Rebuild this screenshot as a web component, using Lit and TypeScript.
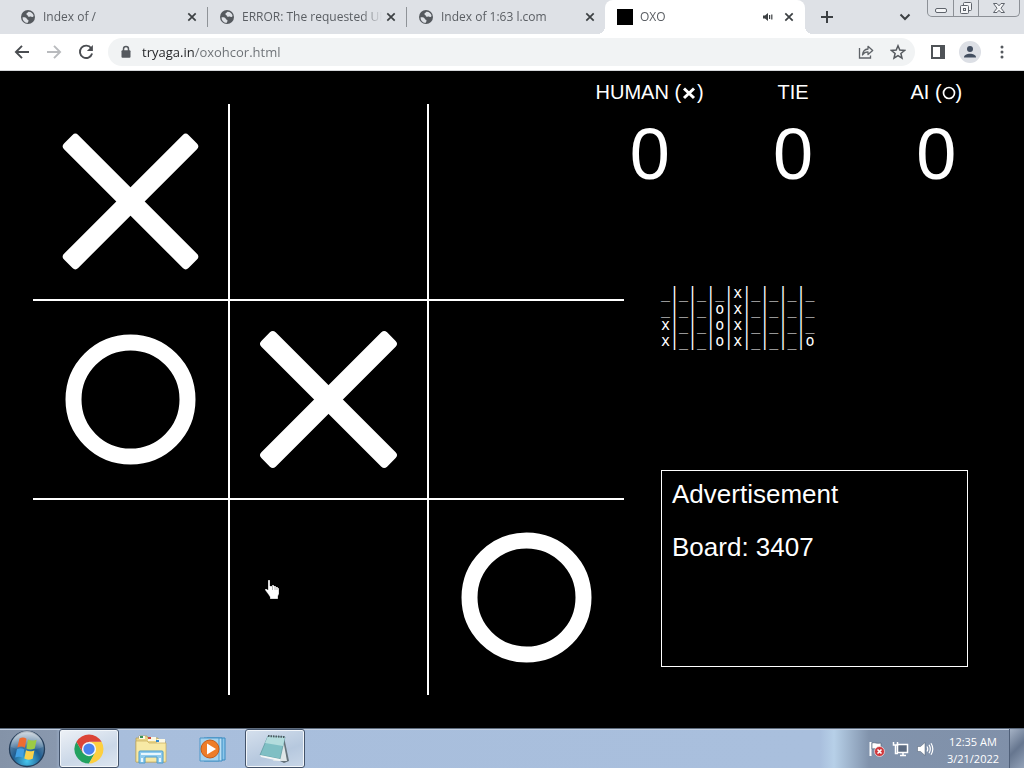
import { LitElement, html, svg, css, nothing } from "lit";
import { customElement, property } from "lit/decorators.js";
import { classMap } from "lit/directives/class-map.js";

const globe = html`<svg class="fav" viewBox="0 0 16 16" width="16" height="16" aria-hidden="true">
  <circle cx="8" cy="8" r="7" fill="#55595e" />
  <path d="M2.6 8.3c1.8-.2 3.600.2 4.200 1.500.5 1.200 1.800.7 1.700 2.100-.1 1-.9 1.200-.9 2.200C4.500 13.800 2.400 11.300 2.600 8.300z" fill="#dee1e6" />
  <path d="M8.400 2.800c-.4 1.200-1.900.9-2 2.100-.1 1 1.300.9 1.400 1.900.1.900 1.300 1.300 2.200.8 1-.6 1.500.6 2.600.4.5-.1.800-.5 1-.9-.4-2.600-2.600-4.400-5.200-4.300z" fill="#dee1e6" />
</svg>`;

const closeIcon = html`<svg viewBox="0 0 10 10" width="10" height="10" aria-hidden="true">
  <path d="M1.300 1.300 8.700 8.700M8.700 1.300 1.300 8.700" stroke="#3c4043" stroke-width="1.700" />
</svg>`;

@customElement("browser-tab")
class BrowserTab extends LitElement {
  @property() label = "";
  @property({ type: Boolean }) active = false;
  @property({ type: Boolean }) divided = false;

  static styles = css`
    :host { display: block; flex: 0 1 199px; min-width: 0; }
    .tab {
      position: relative; box-sizing: border-box; height: 34px; display: flex;
      align-items: center; padding: 0 11px; font: 12px/16px "Open Sans", sans-serif; color: #5a5e63;
    }
    .active { background: #fff; border-radius: 8px 8px 0 0; margin-left: -1px; padding-left: 12px; }
    .active::before, .active::after {
      content: ""; position: absolute; bottom: 0; width: 8px; height: 8px;
    }
    .active::before { left: -8px; background: radial-gradient(circle at 0 0, transparent 8px, #fff 8px); }
    .active::after { right: -8px; background: radial-gradient(circle at 100% 0, transparent 8px, #fff 8px); }
    .divided { border-right: 1px solid #8f9398; border-image: linear-gradient(transparent 8px, #8f9398 8px 26px, transparent 26px) 1; padding-right: 10px; }
    .fav { flex: none; }
    .black { width: 16px; height: 16px; background: #000; }
    .label {
      flex: 1; min-width: 0; margin: 0 4px 0 7px; overflow: hidden; white-space: nowrap;
      mask-image: linear-gradient(to right, #000 calc(100% - 20px), transparent);
    }
    button { border: 0; background: none; padding: 0; display: flex; }
    .audio { margin-right: 10px; }
  `;

  render() {
    return html`<div class=${classMap({ tab: true, active: this.active, divided: this.divided })}>
      ${this.active ? html`<span class="fav black"></span>` : globe}
      <span class="label">${this.label}</span>
      ${this.active
        ? html`<button class="audio" aria-label="Mute tab">
            <svg viewBox="0 0 12 10" width="12" height="10" aria-hidden="true">
              <path d="M1 3.500h2L6 1v8L3 6.500H1z" fill="#3c4043" />
              <path d="M7.600 3v4M9.800 2.500v5" stroke="#3c4043" stroke-width="1.200" />
            </svg></button>`
        : nothing}
      <button aria-label="Close tab">${closeIcon}</button>
    </div>`;
  }
}

@customElement("browser-chrome")
class BrowserChrome extends LitElement {
  static styles = css`
    :host { display: block; }
    button { border: 0; background: none; padding: 0; display: flex; align-items: center; justify-content: center; }
    .strip { display: flex; background: #dee1e6; height: 34px; padding-left: 9px; }
    .tabs { display: flex; flex: 0 1 796px; min-width: 0; }
    .new { width: 28px; margin-left: 8px; flex: none; }
    .spacer { flex: 1; }
    .search { width: 28px; margin-right: 8px; flex: none; }
    .window {
      display: flex; flex: none; height: 16px; margin-right: 4px; border: 1px solid #8c9096; border-top: 0;
      border-radius: 0 0 5px 5px;
    }
    .window button { width: 25px; }
    .window button + button { border-left: 1px solid #8c9096; }
    .window .shut { width: 41px; }
    .bar { display: flex; align-items: center; height: 36px; padding: 0 6px; background: #fff; border-bottom: 1px solid #d5d7da; }
    .nav { width: 32px; height: 28px; flex: none; }
    .field {
      flex: 1; min-width: 0; display: flex; align-items: center; height: 28px; border-radius: 14px;
      background: #f1f3f4; margin: 0 7px 0 6px; padding: 0 7px 0 12px;
    }
    .url {
      flex: 1; min-width: 0; border: 0; outline: 0; padding: 0; margin-left: 10px; height: 20px;
      font: 13px/20px "Open Sans", sans-serif; color: transparent;
      background: linear-gradient(to right, #202124 53px, #6b6f74 53px);
      -webkit-background-clip: text; background-clip: text;
    }
    .act { width: 20px; flex: none; margin-left: 12px; }
    .side { width: 32px; height: 28px; flex: none; }
  `;

  render() {
    return html`
      <div class="strip">
        <div class="tabs">
          <browser-tab label="Index of /" divided></browser-tab>
          <browser-tab label="ERROR: The requested UR" divided></browser-tab>
          <browser-tab label="Index of 1:63 l.com"></browser-tab>
          <browser-tab label="OXO" active></browser-tab>
        </div>
        <button class="new" aria-label="New tab">
          <svg viewBox="0 0 12 12" width="12" height="12"><path d="M6 0v12M0 6h12" stroke="#3c4043" stroke-width="2" /></svg>
        </button>
        <span class="spacer"></span>
        <button class="search" aria-label="Search tabs">
          <svg viewBox="0 0 12 8" width="12" height="8"><path d="M1.500 1.500 6 6l4.500-4.500" fill="none" stroke="#3c4043" stroke-width="2" /></svg>
        </button>
        <div class="window">
          <button aria-label="Minimize"><svg viewBox="0 0 14 14" width="14" height="14"><rect x="1.500" y="7.500" width="11" height="4" rx="1.500" fill="#f4f5f7" stroke="#5f646c" /></svg></button>
          <button aria-label="Restore"><svg viewBox="0 0 14 14" width="14" height="14"><g fill="#f4f5f7" stroke="#5f646c"><rect x="4.500" y="1.500" width="8" height="8" rx="1" /><rect x="1.500" y="4.500" width="8" height="8" rx="1" /><rect x="4.500" y="7.500" width="2" height="2" /></g></svg></button>
          <button class="shut" aria-label="Close"><svg viewBox="0 0 14 14" width="14" height="14"><path d="M1.500 2.500h3.500l2 2.300 2-2.300h3.500L9 7.200l3.500 4.300H9L7 9.300 5 11.500H1.500L5 7.200z" fill="#f4f5f7" stroke="#5f646c" /></svg></button>
        </div>
      </div>
      <div class="bar">
        <button class="nav" aria-label="Back">
          <svg viewBox="0 0 16 16" width="16" height="16"><path d="M15 8H2M8 1.800 1.900 8 8 14.200" fill="none" stroke="#4a4d51" stroke-width="1.900" /></svg>
        </button>
        <button class="nav" aria-label="Forward">
          <svg viewBox="0 0 16 16" width="16" height="16"><path d="M1 8h13M8 1.800 14.100 8 8 14.200" fill="none" stroke="#b9bbbe" stroke-width="1.900" /></svg>
        </button>
        <button class="nav" aria-label="Reload">
          <svg viewBox="0 0 16 16" width="16" height="16"><path d="M13.200 4.200A6.200 6.200 0 1 0 14.100 9.500" fill="none" stroke="#4a4d51" stroke-width="1.900" /><path d="M14.900 1v6H8.900z" fill="#4a4d51" /></svg>
        </button>
        <div class="field">
          <svg viewBox="0 0 12 14" width="12" height="14"><path d="M3.500 6V4a2.500 2.500 0 0 1 5 0v2" fill="none" stroke="#55595e" stroke-width="1.500" /><rect x="1.500" y="5.300" width="9" height="7.500" rx="1" fill="#55595e" /></svg>
          <input class="url" aria-label="Address" value="tryaga.in/oxohcor.html" />
          <button class="act" aria-label="Share">
            <svg viewBox="0 0 16 16" width="16" height="16"><path d="M1.500 4v10h11v-2.500" fill="none" stroke="#5f6368" stroke-width="1.300" /><path d="M4.500 11c.3-4 2.300-5.700 5.500-6V2.300L14.700 6.500 10 10.500V7.900C7.500 7.900 5.800 8.800 4.500 11z" fill="none" stroke="#5f6368" stroke-width="1.300" stroke-linejoin="round" /></svg>
          </button>
          <button class="act" aria-label="Bookmark">
            <svg viewBox="0 0 16 16" width="16" height="16"><path d="M8 1.800l1.800 4.300 4.700.4-3.600 3 1.100 4.600L8 11.600l-4 2.500 1.100-4.600-3.600-3 4.700-.4z" fill="none" stroke="#55595e" stroke-width="1.500" /></svg>
          </button>
        </div>
        <button class="side" aria-label="Side panel">
          <svg viewBox="0 0 14 14" width="14" height="14"><rect x="1" y="1" width="12" height="12" fill="none" stroke="#4f5357" stroke-width="2" /><path d="M9 1h4v12H9z" fill="#4f5357" /></svg>
        </button>
        <button class="side" aria-label="Profile">
          <svg viewBox="0 0 22 22" width="22" height="22"><circle cx="11" cy="11" r="11" fill="#dcdfe5" /><circle cx="11" cy="8" r="3" fill="#424e60" /><path d="M5 16.500c0-5 12-5 12 0z" fill="#424e60" /></svg>
        </button>
        <button class="side" aria-label="Menu">
          <svg viewBox="0 0 4 14" width="4" height="14"><g fill="#55595e"><circle cx="2" cy="2" r="1.500" /><circle cx="2" cy="7" r="1.500" /><circle cx="2" cy="12" r="1.500" /></g></svg>
        </button>
      </div>
    `;
  }
}

const crossShape = svg`<g fill="#fff">
  <rect x="-88" y="-10" width="176" height="20" rx="4" transform="rotate(45)" />
  <rect x="-88" y="-10" width="176" height="20" rx="4" transform="rotate(-45)" />
</g>`;
const ringShape = svg`<circle r="57" fill="none" stroke="#fff" stroke-width="16" />`;

@customElement("oxo-game")
class OxoGame extends LitElement {
  @property({ attribute: false }) cells = ["x", "", "", "o", "x", "", "", "", "o"];

  static styles = css`
    :host { display: flex; flex: 1; min-height: 0; background: #000; color: #fff; font-family: "Liberation Sans", Arial, sans-serif; }
    .board {
      flex: none; height: calc(100% - 66px); aspect-ratio: 1; margin: 33px 0 33px 33px;
      display: grid; grid-template: repeat(3, 1fr) / repeat(3, 1fr);
    }
    .cell { position: relative; border: 0 solid #fff; background: none; padding: 0; min-width: 0; min-height: 0; display: flex; }
    .c0 { border-right-width: 2px; }
    .c2 { border-left-width: 2px; }
    .r0 { border-bottom-width: 2px; }
    .r2 { border-top-width: 2px; }
    .mark { width: 100%; height: 100%; }
    .pointer { position: absolute; left: 34px; top: 79px; }
    .panel { flex: 1; min-width: 0; display: flex; flex-direction: column; }
    .scores { display: flex; margin: 8px 16px 0 -46px; }
    .score { flex: 1; display: flex; flex-direction: column; align-items: center; }
    .who { font-size: 20px; line-height: 26px; display: flex; align-items: center; }
    .sym { margin-top: 2px; }
    .points { font-size: 72px; line-height: 84px; margin-top: 7px; }
    .history { margin: 89px 0 0 37px; font: 15px/16px "DejaVu Sans Mono", monospace; }
    .ad {
      box-sizing: border-box; height: 197px; margin: auto 56px 61px 37px; border: 1px solid #fff;
      padding: 8px 10px; font-size: 26px; line-height: 30px;
    }
    .ad p { margin: 0 0 23px; }
  `;

  private score(name: string, symbol: unknown, points: number) {
    return html`<div class="score">
      <div class="who">${name}${symbol ? html`&nbsp;(${symbol})` : nothing}</div>
      <div class="points">${points}</div>
    </div>`;
  }

  render() {
    return html`
      <div class="board">
        ${this.cells.map(
          (c, i) => html`<button class="cell c${i % 3} r${Math.floor(i / 3)}" aria-label="Square ${i + 1}">
            ${c
              ? html`<svg class="mark" viewBox="-97.5 -97.5 195 195">${c === "x" ? crossShape : ringShape}</svg>`
              : nothing}
            ${i === 7
              ? html`<svg class="pointer" viewBox="0 0 16 21" width="16" height="21" aria-hidden="true">
                  <path d="M4 1h2v6h2V6h2v1h2v1h2v1h1v6l-1 2v3H6v-2l-2-3-3-4v-1h2l1 1z" fill="#fff" stroke="#000" stroke-width=".3" />
                  <path d="M8.500 7v4M11 8v3M13 9v2" stroke="#888" stroke-width=".6" />
                </svg>`
              : nothing}
          </button>`
        )}
      </div>
      <div class="panel">
        <div class="scores">
          ${this.score(
            "HUMAN",
            html`<svg class="sym" viewBox="0 0 16 14" width="16" height="14"><path d="M3 2.500l10 9.500M13 2.500L3 12" stroke="#fff" stroke-width="3" /></svg>`,
            0
          )}
          ${this.score("TIE", null, 0)}
          ${this.score(
            "AI",
            html`<svg class="sym" viewBox="0 0 14 14" width="14" height="14"><circle cx="7" cy="7" r="5.500" fill="none" stroke="#fff" stroke-width="1.700" /></svg>`,
            0
          )}
        </div>
        <div class="history">
          <div>_|_|_|_|x|_|_|_|_</div>
          <div>_|_|_|o|x|_|_|_|_</div>
          <div>x|_|_|o|x|_|_|_|_</div>
          <div>x|_|_|o|x|_|_|_|o</div>
        </div>
        <div class="ad">
          <p>Advertisement</p>
          <p>Board: 3407</p>
        </div>
      </div>
    `;
  }
}

const startOrb = svg`
  <defs>
    <radialGradient id="orb" cx=".5" cy=".85" r=".8"><stop offset="0" stop-color="#45c6ee" /><stop offset=".5" stop-color="#225f92" /><stop offset="1" stop-color="#7d96ad" /></radialGradient>
    <linearGradient id="gloss" x2="0" y2="1"><stop offset="0" stop-color="#fff" stop-opacity=".65" /><stop offset="1" stop-color="#fff" stop-opacity=".05" /></linearGradient>
  </defs>
  <circle cx="19" cy="19" r="17.500" fill="url(#orb)" stroke="#243d59" stroke-width="1.300" />
  <path d="M3 17a16 16 0 0 1 32 0c-8 4-24 4-32 0z" fill="url(#gloss)" />
  <path d="M11.500 8.500c2.500-1.500 4.800-1.200 7 .2l-1.700 9c-2.200-1.300-4.500-1.500-7.500-.2z" fill="#ee6c31" />
  <path d="M20 9.500c2.300 1.300 4.800 1.400 8.600.2l-1.800 8.900c-3.600 1.200-6 1.100-8.400-.2z" fill="#9ccb45" />
  <path d="M8.900 19.200c3-1.300 5.300-1.100 7.500.2l-1.700 8.400c-2.200-1.300-4.500-1.500-7.500-.2z" fill="#42a0e4" />
  <path d="M18 20.200c2.300 1.300 4.800 1.400 8.400.2l-1.700 8.400c-3.600 1.200-6 1.100-8.400-.2z" fill="#fbd24b" />`;

const chromeLogo = svg`
  <path d="M2.600 8.200 9.300 19.800 16 23.500l6.600-3.600L16 31.500A15.500 15.500 0 0 1 2.600 8.200z" fill="#22a160" />
  <path d="M29.400 8.300A15.500 15.500 0 0 1 16 31.500l6.500-11.800L16 8.300z" fill="#fdcf3f" />
  <path d="M2.600 8.200 9.400 20l6.600-4V8.300h13.400A15.500 15.500 0 0 0 2.600 8.200z" fill="#db4437" />
  <circle cx="16" cy="16" r="7.600" fill="#f3f6fa" /><circle cx="16" cy="16" r="6" fill="#4a82ee" />`;

const folderIcon = svg`
  <path d="M1 5h3V3h8l1 2h10l1 3h6v21H1z" fill="#e8d487" stroke="#b59d54" stroke-width=".7" />
  <path d="M4 3h6v3H4zM13 4h8v4h-8zM22 6h8v4h-8z" fill="#fbf8e4" />
  <path d="M5 3h3v2H5z" fill="#35935a" /><path d="M13 4h3v2h-3z" fill="#d1493c" /><path d="M21 7h3v2h-3z" fill="#3689ca" />
  <path d="M1 8h11l2 2h17v19H1z" fill="#f7e9a5" stroke="#c6ac5c" stroke-width=".7" />
  <path d="M4 30V19q0-1 1-1h22q1 0 1 1v11h-6v-6H10v6z" fill="#8fcbed" stroke="#4c9ccc" />
  <path d="M6 20h20v2H6zM6 25h2v4H6zM24 25h2v4h-2z" fill="#e8f7fd" />`;

const mediaIcon = svg`
  <path d="M8 3h18v22H8z" fill="#8cc6ea" stroke="#3b8cc2" /><path d="M5 3h18v23H5z" fill="#b9def3" stroke="#3b8cc2" />
  <path d="M1 3h19v23H1z" fill="#a5d3ef" stroke="#4c97c8" />
  <circle cx="11" cy="14" r="9" fill="#ee7d29" stroke="#c75c18" /><path d="M8 8.500 17 14l-9 5.500z" fill="#fff" />`;

const notepadIcon = svg`
  <path d="M25 3l5 24-5 2-6-3z" fill="#65727a" /><path d="M24 5l4 22H14z" fill="#dfe6e8" />
  <path d="M9 2 26 3 21 25 1 21z" fill="#7fbfc4" stroke="#5a979e" stroke-width=".7" />
  <path d="M9 2 26 3 24 12 6 9z" fill="#b3dcdd" /><path d="M1 21l20 4v2L2 23z" fill="#f4f7f7" />
  <path d="M9 2l17 1" stroke="#4e5a61" stroke-width="2" stroke-dasharray="1.500 1" />`;

@customElement("task-bar")
class TaskBar extends LitElement {
  static styles = css`
    :host {
      box-sizing: border-box; display: flex; flex: none; height: 40px; border-top: 1px solid #5d6b7d;
      background: linear-gradient(to right, #8493a8 0, #8998ae 56px, #a8bedc 64px, #a9bfdd calc(100% - 204px), #b7d0e8 calc(100% - 190px), #8193ac calc(100% - 155px), #8090a9 100%);
      box-shadow: inset 0 1px #c3d0e2;
      font: 11px/17px "Open Sans", sans-serif; color: #fff;
    }
    button { border: 0; background: none; padding: 0; display: flex; align-items: center; justify-content: center; color: inherit; font: inherit; }
    .start { width: 54px; margin-right: 5px; }
    .app { box-sizing: border-box; width: 60px; margin-right: 2px; border: 1px solid transparent; border-radius: 3px; }
    .open { border-color: #43536a; background: linear-gradient(160deg, #edf1f6, #cbd8e8 60%, #dde6f0); box-shadow: inset 0 0 0 1px #f2f6fa; }
    .faded { background: linear-gradient(160deg, #d5e0ed, #b6c8de 60%, #c9d7e8); }
    .spacer { flex: 1; }
    .tray { width: 24px; }
    .clock { width: 72px; margin-top: 2px; flex-direction: column; }
    .desktop { width: 15px; border-left: 1px solid #4f5f78; background: linear-gradient(135deg, #a5b2c5, #66768f 50%, #93a2b8); }
  `;

  render() {
    return html`
      <button class="start" aria-label="Start"><svg viewBox="0 0 38 38" width="38" height="38">${startOrb}</svg></button>
      <button class="app open" aria-label="Chrome"><svg viewBox="0 0 32 32" width="30" height="30">${chromeLogo}</svg></button>
      <button class="app" aria-label="Explorer"><svg viewBox="0 0 32 32" width="32" height="32">${folderIcon}</svg></button>
      <button class="app" aria-label="Media Player"><svg viewBox="0 0 28 28" width="28" height="28">${mediaIcon}</svg></button>
      <button class="app open faded" aria-label="Notepad"><svg viewBox="0 0 32 30" width="32" height="30">${notepadIcon}</svg></button>
      <span class="spacer"></span>
      <button class="tray" aria-label="Action Center">
        <svg viewBox="0 0 18 18" width="18" height="18"><path d="M2.500 2v14" stroke="#fff" stroke-width="2" /><path d="M4 3c3-1 4 1 9 0v6c-4 1-6-1-9 0z" fill="#fff" stroke="#4b596d" stroke-width=".6" /><circle cx="11.500" cy="11.500" r="5" fill="#d0373b" stroke="#fff" stroke-width=".6" /><path d="M9.500 9.500l4 4M13.500 9.500l-4 4" stroke="#fff" stroke-width="1.600" /></svg>
      </button>
      <button class="tray" aria-label="Network">
        <svg viewBox="0 0 18 18" width="18" height="18"><path d="M5.500 4.500h10v8h-10zM8 15.500h6M11 12.500v3" fill="#5d6c82" stroke="#fff" stroke-width="1.500" /><path d="M1.500 2v3h4V2M3.500 5v8.500H6" fill="none" stroke="#fff" stroke-width="1.500" /></svg>
      </button>
      <button class="tray" aria-label="Volume">
        <svg viewBox="0 0 18 18" width="18" height="18"><path d="M1.500 6.500h3L9 2.500v13l-4.500-4h-3z" fill="#fff" stroke="#4b596d" stroke-width=".5" /><path d="M11 6.500q1.500 2.500 0 5M13 4.800q2.600 4.200 0 8.400M15 3.300q3.600 5.700 0 11.400" fill="none" stroke="#fff" stroke-width="1.200" /></svg>
      </button>
      <button class="clock"><span>12:35 AM</span><span>3/21/2022</span></button>
      <button class="desktop" aria-label="Show desktop"></button>
    `;
  }
}

@customElement("app-root")
class AppRoot extends LitElement {
  static styles = css`
    :host { display: flex; flex-direction: column; height: 100vh; overflow: hidden; }
  `;

  render() {
    return html`<browser-chrome></browser-chrome><oxo-game></oxo-game><task-bar></task-bar>`;
  }
}
